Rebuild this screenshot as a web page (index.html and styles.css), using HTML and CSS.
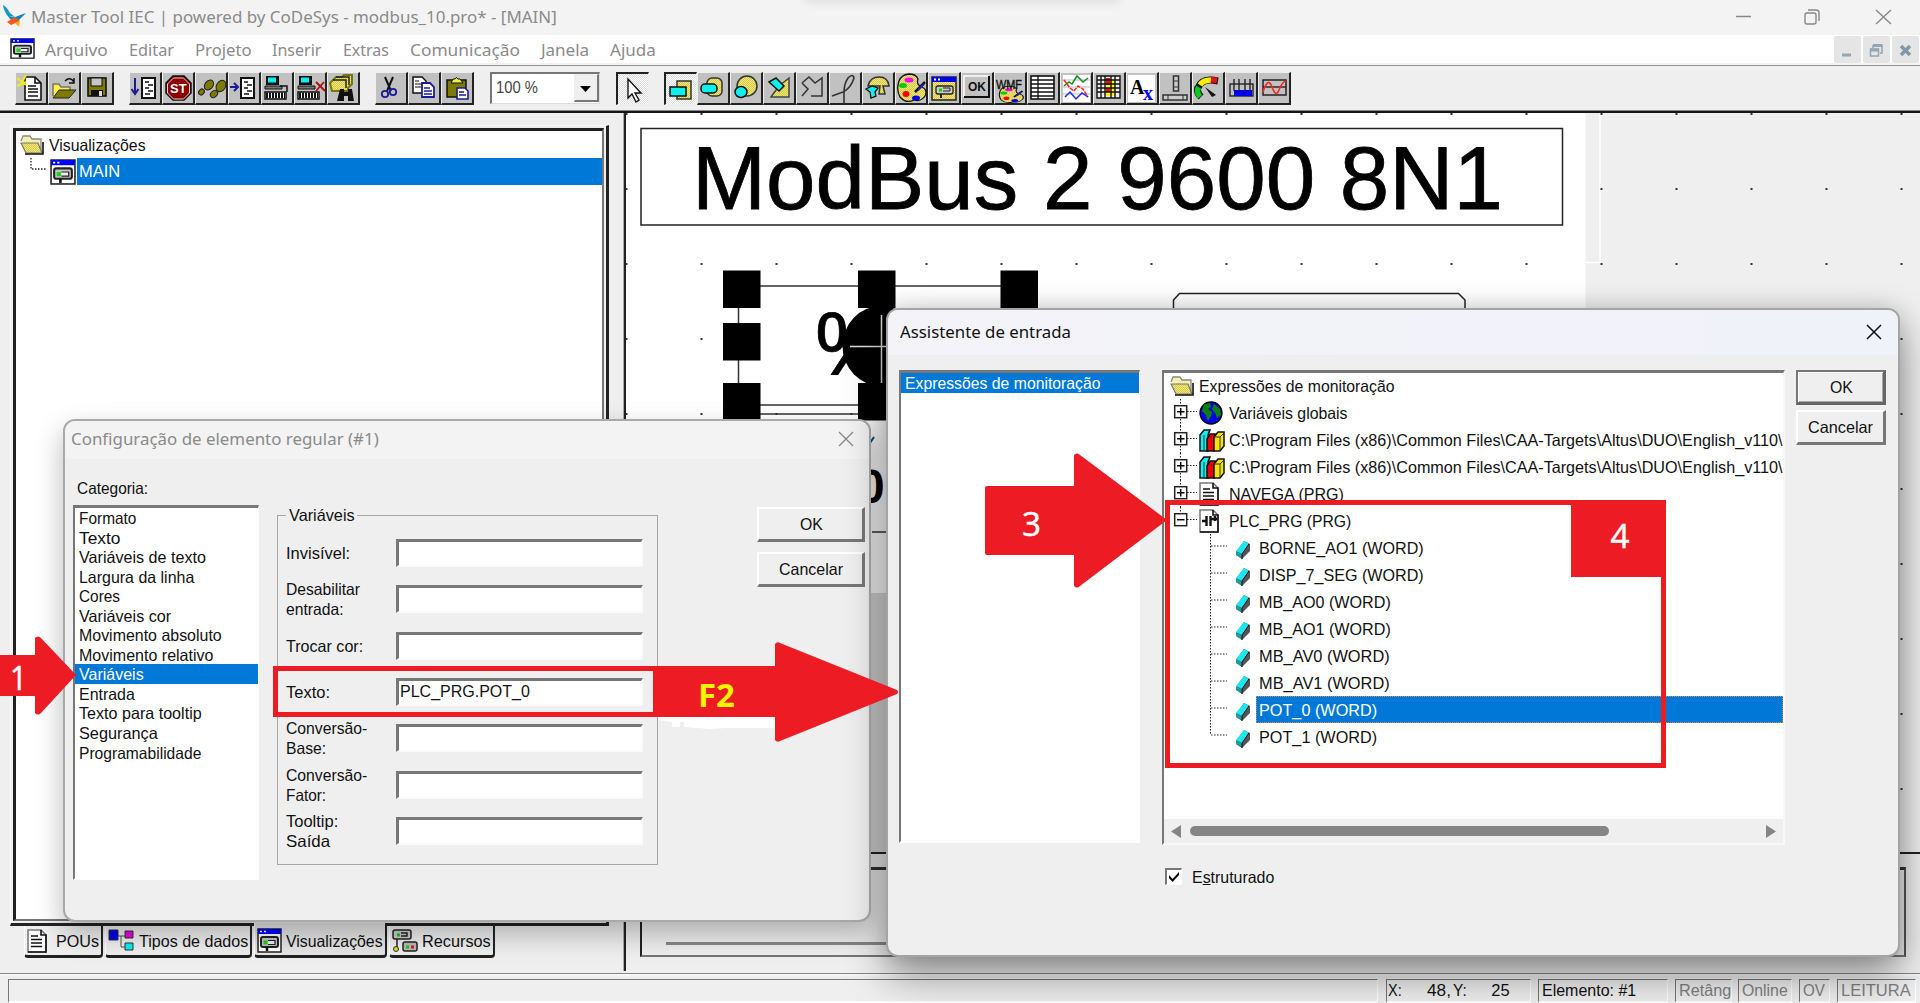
FILE: index.html
```html
<!DOCTYPE html>
<html lang="pt">
<head>
<meta charset="utf-8">
<title>Master Tool IEC</title>
<link rel="stylesheet" href="styles.css">
</head>
<body>
<svg width="0" height="0" class="defs">
  <defs>
    <pattern id="dither" width="2" height="2" patternUnits="userSpaceOnUse"><rect width="2" height="2" fill="#ffef3a"/><rect width="1" height="1" fill="#c9c08a"/><rect x="1" y="1" width="1" height="1" fill="#c9c08a"/></pattern>
    <symbol id="folder" viewBox="0 0 24 20"><path d="M1 6 3 1h7l2 3h9v13" fill="#f4f0b0" stroke="#888" stroke-width="1.3"/><path d="M1 8h17l4 10H6z" fill="url(#dither)" stroke="#777" stroke-width="1.2"/><path d="M5 19h18V7" fill="none" stroke="#111" stroke-width="1.6"/></symbol>
    <symbol id="visu" viewBox="0 0 25 25"><rect x="1" y="1" width="23" height="23" fill="#fff" stroke="#222" stroke-width="1.5"/><rect x="1" y="1" width="23" height="5" fill="#00f"/><path d="M3 3.5h2M7 3.5h2" stroke="#fff" stroke-width="1.5"/><rect x="4" y="9" width="17" height="10" rx="2" fill="#c4c4c4" stroke="#222" stroke-width="2"/><rect x="6.500" y="12.500" width="4" height="4" fill="#1fd01f"/><path d="M11 12.500h7v4h-7" fill="#eee" stroke="#222" stroke-width="1.200"/><path d="M10 19v4" stroke="#111" stroke-width="2.500"/></symbol>
    <symbol id="globe" viewBox="0 0 24 24"><circle cx="12" cy="12" r="11" fill="#0000e8" stroke="#000" stroke-width="1.3"/><path d="M5 3.500 11 2l1 4-3 2 4 3-1 4-3 5-2-6-4-4zM15 3l6 5 1 6-4 3-2-5-3-4z" fill="#078207"/></symbol>
    <symbol id="books" viewBox="0 0 26 26"><path d="M1 8 5 3h6l-2 5v16H1z" fill="#1ee" stroke="#111" stroke-width="1.500"/><path d="M8 12 11 7h5l-1 5v12H8z" fill="#e00" stroke="#111" stroke-width="1.500"/><path d="M15 10 19 5h6v14l-4 5h-6z" fill="#f4e400" stroke="#111" stroke-width="1.500"/><path d="M5 8v15M15 10h6v13M21 10l4-4" stroke="#333" fill="none"/></symbol>
    <symbol id="doc" viewBox="0 0 20 24"><path d="M1 1h13l5 5v17H1z" fill="#fff" stroke="#777" stroke-width="1.500"/><path d="M14 1v5h5v17H1" fill="none" stroke="#111" stroke-width="1.600"/><path d="M4 7h7M4 10.500h11M4 14h11M4 17.500h11" stroke="#111" stroke-width="1.600"/></symbol>
    <symbol id="ladder" viewBox="0 0 20 24"><path d="M1 1h13l5 5v17H1z" fill="#fff" stroke="#777" stroke-width="1.500"/><path d="M14 1v5h5v17H1" fill="none" stroke="#111" stroke-width="1.600"/><path d="M3 12h4M12 10h6M7.500 7v10M11.500 7v10M16 7v5" stroke="#111" stroke-width="2.400"/></symbol>
    <symbol id="gem" viewBox="0 0 16 20"><path d="M1 12 9 1l6 3v7l-8 8-6-4z" fill="#555"/><path d="M1 11 9 1l5 3-7 10z" fill="#1ee6f0"/><path d="M1 11.500 7 14v4l-6-3z" fill="#15a0a8"/><path d="M7 14l7-10M7 14v5" stroke="#111"/></symbol>
    <symbol id="plus" viewBox="0 0 27 27"><path d="M8.500 0v7M8.500 20v7M15 12.500h10" stroke="#222" stroke-dasharray="1.500 1.500"/><rect x="2.700" y="6.700" width="12" height="12" fill="#fff" stroke="#222" stroke-width="1.500"/><path d="M5 12.700h7.500M8.700 9v7.500" stroke="#000" stroke-width="1.500"/></symbol>
    <symbol id="minus" viewBox="0 0 27 27"><path d="M8.500 0v7M15 12.500h10" stroke="#222" stroke-dasharray="1.500 1.500"/><rect x="2.700" y="6.700" width="12" height="12" fill="#fff" stroke="#222" stroke-width="1.500"/><path d="M5 12.700h7.500" stroke="#000" stroke-width="1.500"/></symbol>
    <symbol id="twig" viewBox="0 0 20 27"><path d="M2.500 0v27M3 12h16" stroke="#222" stroke-dasharray="1.500 1.500"/></symbol>
    <symbol id="twigend" viewBox="0 0 20 27"><path d="M2.500 0v12M3 12h16" stroke="#222" stroke-dasharray="1.500 1.500"/></symbol>
    <symbol id="palette" viewBox="0 0 33 33"><path d="M4 9q2-6 10-7q7 0 9 5q-2 6 4 8q6 3 3 9q-4 6-11 4q-8 4-14-3Q1 18 4 9z" fill="url(#dither)" stroke="#111" stroke-width="1.300"/><ellipse cx="14" cy="8" rx="4.500" ry="2.500" fill="#f0f"/><ellipse cx="8" cy="13.500" rx="4" ry="2.500" fill="#0c0"/><ellipse cx="11" cy="22" rx="3.500" ry="3" fill="#f00"/><ellipse cx="21" cy="26" rx="4" ry="2.500" fill="#00d"/><path d="M30 10 20 20" stroke="#111" stroke-width="2.500"/><path d="M29 12l-6 6" stroke="#22b" stroke-width="2"/></symbol>
    <symbol id="plc" viewBox="0 0 33 33"><rect x="5" y="4" width="13" height="9" fill="#111"/><rect x="7" y="5.500" width="8" height="5" fill="#1ee"/><path d="M4 14h17v3H4z" fill="#777" stroke="#111"/><rect x="4" y="20" width="21" height="7" fill="#fff" stroke="#111" stroke-width="1.500"/><path d="M5 23.500h19" stroke="#111" stroke-width="6" stroke-dasharray="2 1"/></symbol>
  </defs>
</svg>

<div class="app">
  <header class="titlebar">
    <svg width="24" height="24" viewBox="0 0 24 24"><path d="M0 0q4 2 7 8l5 4-7-1Q1 7 0 0z" fill="#1597c8"/><path d="M3 8q4 5 9 4l11-4-9 9-7-3z" fill="#0d84b8"/><path d="M4 17l8-5 5 4-9 4z" fill="#f25a1e"/><path d="M12 18l5-2-1 6z" fill="#f7b01e"/></svg>
    <span class="t seg" data-w="526">Master Tool IEC | powered by CoDeSys - modbus_10.pro* - [MAIN]</span>
    <svg class="winctl" width="160" height="20" viewBox="0 0 160 20"><g fill="none" stroke="#888" stroke-width="1.400"><path d="M1 9.500h15M141 3l15 14M156 3l-15 14"/><rect x="70" y="6" width="11" height="11" rx="2"/><path d="M73 3h8q3 0 3 3v8"/></g></svg>
    <i class="peek"></i>
  </header>
  <nav class="menubar">
    <svg width="25" height="21" viewBox="0 0 25 25" preserveAspectRatio="none"><use href="#visu" width="25" height="25"/></svg>
    <span class="t seg" data-w="63">Arquivo</span><span class="t seg" data-w="45">Editar</span><span class="t seg" data-w="57">Projeto</span><span class="t seg" data-w="49">Inserir</span><span class="t seg" data-w="46">Extras</span><span class="t seg" data-w="110">Comunicação</span><span class="t seg" data-w="48">Janela</span><span class="t seg" data-w="46">Ajuda</span>
    <div class="mdi">
      <b><svg width="27" height="27"><path d="M8 19h9" stroke="#94a5b5" stroke-width="3"/></svg></b>
      <b><svg width="27" height="27"><g fill="none" stroke="#94a5b5" stroke-width="1.500"><path d="M10 9h9v8h-2M10 9v3"/><path d="M10 9.500h9" stroke-width="3"/><rect x="7.500" y="13" width="8" height="7"/><path d="M7 14h9" stroke-width="3"/></g></svg></b>
      <b><svg width="27" height="27"><path d="M9 10l9 9M18 10l-9 9" stroke="#8497a8" stroke-width="3.500"/></svg></b>
    </div>
  </nav>
  <div class="rule"></div>
  <div class="toolbar">
    <div class="group g1">
      <b><svg viewBox="0 0 33 33"><path d="M10 5h10l6 6v17H10z" fill="#fff" stroke="#111" stroke-width="1.600"/><path d="M20 5v6h6M13 14h8M13 17h10M13 20h10M13 24h10" stroke="#111" fill="none" stroke-width="1.600"/><path d="M2 6l9 7M11 3l-5 9M2 14l9-4" stroke="#f3ea20" stroke-width="2"/></svg></b>
      <b><svg viewBox="0 0 33 33"><path d="M5 24V12h6l2 3h9v4" fill="#ffef4a" stroke="#776" stroke-width="1.500"/><path d="M5 26 11 18h17l-7 8z" fill="#7e7a00" stroke="#222"/><path d="M17 9q5-5 9 1M26 6v5h-5" fill="none" stroke="#111" stroke-width="1.500"/></svg></b>
      <b><svg viewBox="0 0 33 33"><rect x="7" y="6" width="18" height="18" fill="#7e7a00" stroke="#111" stroke-width="1.600"/><rect x="10" y="6" width="11" height="8" fill="#c6c6c6" stroke="#111"/><path d="M10 18h12v6H10z" fill="#111"/><path d="M18 19h3v5h-3z" fill="#ddd"/></svg></b>
    </div>
    <div class="group g2">
      <b><svg viewBox="0 0 33 33"><rect x="13" y="6" width="13" height="20" fill="#fff" stroke="#111" stroke-width="2"/><path d="M16 10h4M19 13h5M16 16h4M19 19h5M16 22h5" stroke="#111" stroke-width="1.500"/><path d="M6 6v15M2.500 17l3.500 5 3.500-5" stroke="#1a1a99" fill="none" stroke-width="2"/></svg></b>
      <b><svg viewBox="0 0 33 33"><path d="M11 4h11l7 7v10l-7 7H11l-7-7V11z" fill="#8c0000" stroke="#111" stroke-width="1.500"/><path d="M11.500 6h10l6 6v9l-6 6h-10l-6-6v-9z" fill="none" stroke="#e8caca"/><text x="8" y="21" class="stop">ST</text></svg></b>
      <b><svg viewBox="0 0 33 33"><g fill="#7e7a00" stroke="#222"><ellipse cx="14" cy="13" rx="5.500" ry="4" transform="rotate(-50 14 13)"/><ellipse cx="6.500" cy="20" rx="3.200" ry="2.600" transform="rotate(-50 6.500 20)"/><ellipse cx="26" cy="14" rx="6" ry="4.500" transform="rotate(-60 26 14)"/><ellipse cx="19" cy="22" rx="4" ry="3" transform="rotate(-40 19 22)"/></g></svg></b>
      <b><svg viewBox="0 0 33 33"><rect x="13" y="6" width="13" height="20" fill="#fff" stroke="#111" stroke-width="2"/><path d="M16 10h4M19 13h5M16 16h4M19 19h5M16 22h5" stroke="#111" stroke-width="1.500"/><path d="M2 15h8M6 11l4 4-4 4" stroke="#1a1a99" fill="none" stroke-width="2"/></svg></b>
      <b><svg viewBox="0 0 33 33"><use href="#plc"/><path d="M19 14h7v6" fill="none" stroke="#111" stroke-width="1.500"/></svg></b>
      <b><svg viewBox="0 0 33 33"><use href="#plc"/><path d="M22 10l9 9M30 10l-8 9" stroke="#a11" stroke-width="1.800"/></svg></b>
      <b><svg viewBox="0 0 33 33"><path d="M9 5h6l2-2h8v9l-4 4v3H5l-2-8z" fill="url(#dither)" stroke="#7a7800" stroke-width="2"/><path d="M6 8h13v8M9 5h13v8" fill="none" stroke="#222" stroke-width="1.500"/><path d="M13 17h4v3h4v-3h4l2 12h-6v-5h-4v5h-7z" fill="#111"/></svg></b>
    </div>
    <div class="group g3">
      <b><svg viewBox="0 0 33 33"><path d="M10 5l6 14M18 5l-6 14" stroke="#111" stroke-width="2" fill="none"/><g fill="none" stroke="#1a1a99" stroke-width="1.800"><circle cx="10" cy="22" r="3.200"/><circle cx="18" cy="20" r="3.200"/></g></svg></b>
      <b><svg viewBox="0 0 33 33"><path d="M5 5h9l4 4v12H5z" fill="#fff" stroke="#111" stroke-width="1.500"/><path d="M7 9h4M7 12h8M7 15h8" stroke="#111"/><path d="M14 11h8l4 4v10H14z" fill="#fff" stroke="#1a1a99" stroke-width="1.800"/><path d="M16 16h6M16 19h8M16 22h8" stroke="#1a1a99" stroke-width="1.300"/></svg></b>
      <b><svg viewBox="0 0 33 33"><rect x="6" y="8" width="19" height="17" fill="#7e7a00" stroke="#111" stroke-width="1.500"/><path d="M10 11l2-4h2q1-3 3 0h2l3 4z" fill="#f5ea50" stroke="#111"/><path d="M16 16h8l3 3v8H16z" fill="#fff" stroke="#1a1a99" stroke-width="1.600"/><path d="M18 20h5M18 23h7" stroke="#1a1a99" stroke-width="1.300"/></svg></b>
    </div>
    <div class="combo"><span class="t ui" data-w="42">100 %</span><i><svg width="25" height="29"><path d="M7 13h11l-5.500 6z" fill="#000"/></svg></i></div>
    <div class="group g4"><b class="on"><svg viewBox="0 0 33 33"><path d="M11 6v19l4-4 4 8 3-2-4-7h6z" fill="#fff" stroke="#111" stroke-width="1.400"/></svg></b></div>
    <div class="group g5">
      <b class="on"><svg viewBox="0 0 33 33"><rect x="12" y="8" width="14" height="18" fill="url(#dither)" stroke="#333" stroke-width="1.500"/><rect x="5" y="14" width="16" height="9" fill="#1ee" stroke="#111" stroke-width="1.500"/></svg></b>
      <b><svg viewBox="0 0 33 33"><rect x="10" y="6" width="15" height="18" rx="5" fill="url(#dither)" stroke="#333" stroke-width="1.500"/><rect x="4" y="12" width="16" height="9" rx="4" fill="#1ee" stroke="#111" stroke-width="1.500"/></svg></b>
      <b><svg viewBox="0 0 33 33"><circle cx="17" cy="14" r="10" fill="url(#dither)" stroke="#333" stroke-width="1.500"/><ellipse cx="11" cy="20" rx="6" ry="5.500" fill="#1ee" stroke="#111" stroke-width="1.500"/></svg></b>
      <b><svg viewBox="0 0 33 33"><path d="M16 14 26 6v19H8z" fill="url(#dither)" stroke="#444" stroke-width="1.500"/><path d="M6 10l7-4 8 8-5 5z" fill="#1ee" stroke="#111" stroke-width="1.500"/></svg></b>
      <b><svg viewBox="0 0 33 33"><path d="M6 11l7-6 6 6 7-5v18H15M6 11l6 6-6 7" fill="none" stroke="#333" stroke-width="1.500"/></svg></b>
      <b><svg viewBox="0 0 33 33"><path d="M3 24l11-4q8-4 11-14q-1-5-6 0q-4 6-4 14v11" fill="none" stroke="#333" stroke-width="1.600"/></svg></b>
      <b><svg viewBox="0 0 33 33"><path d="M6 14q2-9 11-9t10 9h-6l2 8h-6l1-8z" fill="url(#dither)" stroke="#333" stroke-width="1.500"/><path d="M4 17l6-3 6 2-3 4 1 4-5 2-1-6z" fill="#1ee" stroke="#111" stroke-width="1.300"/></svg></b>
      <b><svg viewBox="0 0 33 33"><use href="#palette"/></svg></b>
      <b><svg viewBox="0 0 33 33"><rect x="4" y="5" width="24" height="23" fill="url(#dither)" stroke="#222" stroke-width="1.500"/><rect x="4" y="5" width="24" height="5" fill="#00e"/><path d="M6 7.500h2M10 7.500h2" stroke="#fff" stroke-width="2"/><rect x="8" y="14" width="17" height="8" rx="2" fill="#ccc" stroke="#222" stroke-width="1.300"/><path d="M11 18h3" stroke="#1c1" stroke-width="3"/><path d="M15 16h7v3h-7" fill="none" stroke="#222"/><path d="M13 22v4" stroke="#222" stroke-width="2"/></svg></b>
      <b><svg viewBox="0 0 33 33"><path d="M3 25V4h25" fill="none" stroke="#fff" stroke-width="1.500"/><path d="M3 25h25V4" fill="none" stroke="#111" stroke-width="2"/><text x="7" y="19" class="tiny" textLength="18">OK</text></svg></b>
      <b><svg viewBox="0 0 33 33"><g transform="translate(3 13) scale(.85 .6)"><use href="#palette" width="33" height="33"/></g><text x="2" y="17" class="tiny thin" textLength="26" lengthAdjust="spacingAndGlyphs">WMF</text></svg></b>
      <b><svg viewBox="0 0 33 33"><rect x="4" y="4" width="23" height="23" fill="#fff" stroke="#111" stroke-width="1.600"/><path d="M4 8h23M4 12h23M4 16h23M4 20h23M4 24h23M11 4v23" stroke="#111" stroke-width="1.300"/></svg></b>
      <b><svg viewBox="0 0 33 33"><rect x="3" y="3" width="27" height="27" fill="#fff"/><path d="M3 8h27M3 15h27M3 22h27" stroke="#bbb"/><path d="M4 14l5-4 3 2 5-8 6 6 5-4" fill="none" stroke="#118a22" stroke-width="1.500"/><path d="M4 8l6 8 4 3 4-5 5 3 5 8" fill="none" stroke="#f22" stroke-width="1.500" stroke-dasharray="4 1"/><path d="M5 25l5-5 6 7 6-6 6 4" fill="none" stroke="#22f" stroke-width="1.500"/></svg></b>
      <b><svg viewBox="0 0 33 33"><rect x="4" y="4" width="23" height="22" fill="#eee"/><path d="M12 8h10v16H12z" fill="#ffee20"/><path d="M13 6h4v7h-4zM13 16h4v4h-4z" fill="#e11"/><path d="M4 4h23v22H4zM4 8h23M4 12h23M4 16h23M4 20h23M8 4v22M12 4v22M18 4v22M22 4v22" fill="none" stroke="#111" stroke-width="1.400"/></svg></b>
      <b><svg viewBox="0 0 33 33"><rect x="2" y="3" width="27" height="27" fill="#fff"/><text x="4" y="22" class="axa">A</text><text x="17" y="28" class="axx">x</text></svg></b>
      <b><svg viewBox="0 0 33 33"><g fill="#ccc" stroke="#333" stroke-width="1.500"><rect x="14.500" y="4" width="5" height="15"/><rect x="4" y="23" width="24" height="5"/></g><path d="M15 9h4M15 15h4M9 23v5M24 23v5" stroke="#333"/></svg></b>
      <b><svg viewBox="0 0 33 33"><g fill="none" stroke-width="5.500"><path d="M9 25Q4 20 6 15" stroke="#111" stroke-width="7"/><path d="M6 16Q9 7 20 8L26 9" stroke="#111" stroke-width="7"/><path d="M8 25Q4 20 6.500 15" stroke="#0c2"/><path d="M8 13Q11 8 19 8" stroke="#fe0"/><path d="M19 7.500l6 1" stroke="#e11"/></g><path d="M13 15l11 8-4 2z" fill="#111"/></svg></b>
      <b><svg viewBox="0 0 33 33"><rect x="5" y="12" width="23" height="12" fill="none" stroke="#222" stroke-width="1.400"/><path d="M9 18h18v6H9z" fill="#00e"/><path d="M9 7v12M14 7v12M20 7v12M25 7v12" stroke="#222" stroke-width="1.400"/></svg></b>
      <b><svg viewBox="0 0 33 33"><rect x="5" y="8" width="23" height="15" fill="none" stroke="#222" stroke-width="1.500"/><path d="M5 15h23" stroke="#222" stroke-width="1.400"/><path d="M5 20q5-16 9-5t7 3 7-9" fill="none" stroke="#f22" stroke-width="1.600"/></svg></b>
    </div>
  </div>
  <div class="darkrule"></div>

  <main class="workspace">
    <section class="objects">
      <div class="frame"><div class="tree-main">
        <div class="root"><svg width="24" height="20"><use href="#folder"/></svg><span class="t ui" data-w="97">Visualizações</span></div>
        <div class="leaf"><svg width="18" height="27" viewBox="0 0 18 27"><path d="M1 0v11h16" fill="none" stroke="#222" stroke-dasharray="1.500 1.500" stroke-width="1.300"/></svg><svg width="26" height="26"><use href="#visu"/></svg><div class="sel"><span class="t ui" data-w="41">MAIN</span></div></div>
      </div></div>
      <div class="tabs">
        <div class="tab"><svg width="20" height="24"><use href="#doc"/></svg><span class="t ui" data-w="43">POUs</span></div>
        <div class="tab"><svg width="26" height="24"><path d="M9 7h8M13 7v11h4" fill="none" stroke="#555"/><path d="M1 1h9v10H1z" fill="#00e" stroke="#333"/><path d="M17 2h8v7h-8z" fill="#e0d" stroke="#333"/><path d="M17 14h8v7h-8z" fill="#1ee" stroke="#333"/></svg><span class="t ui" data-w="109">Tipos de dados</span></div>
        <div class="tab open"><svg width="25" height="25"><use href="#visu"/></svg><span class="t ui" data-w="97">Visualizações</span></div>
        <div class="tab"><svg width="26" height="24"><rect x="1" y="1" width="18" height="9" rx="2" fill="#ccc" stroke="#222" stroke-width="1.500"/><path d="M5 6h3" stroke="#1c1" stroke-width="3"/><path d="M9 4h6v3H9M5 10v9" fill="none" stroke="#222" stroke-width="1.500"/><rect x="11" y="13" width="14" height="9" rx="2" fill="#bbb" stroke="#222" stroke-width="1.500"/><path d="M14 18h3" stroke="#1c1" stroke-width="3"/><path d="M19 18h3" stroke="#e11" stroke-width="3"/><circle cx="4" cy="20" r="2.500" fill="#dd2" stroke="#333"/></svg><span class="t ui" data-w="69">Recursos</span></div>
      </div>
    </section>
    <section class="editor">
      <svg class="canvas" width="1294" height="739" viewBox="626 113 1294 739">
        <defs><pattern id="grid" x="625.500" y="188" width="75" height="75" patternUnits="userSpaceOnUse"><rect width="2" height="2" fill="#333"/></pattern></defs>
        <rect x="626" y="113" width="959.500" height="480" fill="#fff"/>
        <rect x="626" y="593" width="959.500" height="260" fill="#dadada"/>
        <path d="M1600 113v149.500h-15" fill="none" stroke="#fff" stroke-width="1.500"/>
        <rect x="626" y="113" width="1294" height="739" fill="url(#grid)"/>
        <rect x="641" y="128.500" width="921.500" height="96.500" fill="#fff" stroke="#222" stroke-width="1.500"/>
        <text x="692" y="208.500" class="big heavy" textLength="811" lengthAdjust="spacingAndGlyphs">ModBus 2 9600 8N1</text>
        <rect x="738.500" y="286" width="283" height="119" fill="#fff" stroke="#333" stroke-width="1.500"/>
        <path d="M738 414h300M872 532h300" stroke="#333" stroke-width="1.500"/>
        <text x="815" y="374" class="big heavy">%</text>
        <ellipse cx="881" cy="346" rx="38.500" ry="40"/>
        <path d="M850 346.500h60M881.500 315v68" stroke="#ddd" stroke-width="1.500"/>
        <path d="M723 270.500h37.500V308H723zM858 270.500h37.500V308H858zM1000.500 270.500h37.500V308h-37.500zM723 323h37.500v37.500H723zM723 383h37.500v37.500H723zM858 383h37.500v37.500H858z"/>
        <path d="M874 437l-4 6" stroke="#148" stroke-width="2"/>
        <text x="858" y="503" class="digit">0</text>
        <path d="M1173.500 320v-20l6-6.500h279l6.500 6.500v20" fill="none" stroke="#222" stroke-width="1.500"/>
      </svg>
      <div class="messages"><div class="pane"><i></i></div></div>
    </section>
  </main>
  <footer class="status">
    <div class="cell main"></div>
    <div class="cell c1"><span class="t ui" data-w="14">X:</span><span class="t ui" data-w="24">48,</span><span class="t ui" data-w="14">Y:</span><span class="t ui" data-w="18">25</span></div>
    <div class="cell c2"><span class="t ui" data-w="94">Elemento: #1</span></div>
    <div class="cell c3 off"><span class="t ui" data-w="52">Retâng</span></div>
    <div class="cell c4 off"><span class="t ui" data-w="46">Online</span></div>
    <div class="cell c5 off"><span class="t ui" data-w="22">OV</span></div>
    <div class="cell c6 off"><span class="t ui" data-w="70">LEITURA</span></div>
  </footer>
</div>

<div class="window config">
  <div class="caption"><span class="t seg" data-w="308">Configuração de elemento regular (#1)</span><svg width="16" height="16"><path d="M1 1l14 14M15 1L1 15" stroke="#888" stroke-width="1.300"/></svg></div>
  <div class="content">
    <div class="cats">
      <label><span class="t ui" data-w="71">Categoria:</span></label>
      <div class="list">
        <p><span class="t ui" data-w="57">Formato</span></p><p><span class="t ui" data-w="41">Texto</span></p><p><span class="t ui" data-w="127">Variáveis de texto</span></p><p><span class="t ui" data-w="115">Largura da linha</span></p><p><span class="t ui" data-w="41">Cores</span></p><p><span class="t ui" data-w="92">Variáveis cor</span></p><p><span class="t ui" data-w="143">Movimento absoluto</span></p><p><span class="t ui" data-w="134">Movimento relativo</span></p><p class="sel"><span class="t ui" data-w="65">Variáveis</span></p><p><span class="t ui" data-w="56">Entrada</span></p><p><span class="t ui" data-w="123">Texto para tooltip</span></p><p><span class="t ui" data-w="79">Segurança</span></p><p><span class="t ui" data-w="122">Programabilidade</span></p>
      </div>
    </div>
    <fieldset>
      <legend><span class="t ui" data-w="66">Variáveis</span></legend>
      <div class="row"><label><span class="t ui" data-w="64">Invisível:</span></label><div class="input"></div></div>
      <div class="row"><label><span class="t ui" data-w="74">Desabilitar</span><span class="t ui" data-w="58">entrada:</span></label><div class="input"></div></div>
      <div class="row"><label><span class="t ui" data-w="77">Trocar cor:</span></label><div class="input"></div></div>
      <div class="row"><label><span class="t ui" data-w="44">Texto:</span></label><div class="input"><span class="t ui" data-w="130">PLC_PRG.POT_0</span></div></div>
      <div class="row"><label><span class="t ui" data-w="81">Conversão-</span><span class="t ui" data-w="40">Base:</span></label><div class="input"></div></div>
      <div class="row"><label><span class="t ui" data-w="81">Conversão-</span><span class="t ui" data-w="40">Fator:</span></label><div class="input"></div></div>
      <div class="row"><label><span class="t ui" data-w="52">Tooltip:</span><span class="t ui" data-w="44">Saída</span></label><div class="input"></div></div>
    </fieldset>
    <div class="buttons"><button><span class="t ui" data-w="23">OK</span></button><button><span class="t ui" data-w="64">Cancelar</span></button></div>
  </div>
</div>

<div class="window assist">
  <div class="caption"><span class="t seg" data-w="171">Assistente de entrada</span><svg width="16" height="16"><path d="M1 1l14 14M15 1L1 15" stroke="#111" stroke-width="1.500"/></svg></div>
  <div class="content">
    <div class="list"><p class="sel"><span class="t ui" data-w="196">Expressões de monitoração</span></p></div>
    <div class="right">
      <div class="tree">
        <div class="n0"><svg width="24" height="20"><use href="#folder"/></svg><span class="t ui" data-w="196">Expressões de monitoração</span></div>
        <div class="n1"><svg width="27" height="27"><use href="#plus"/></svg><svg width="24" height="24"><use href="#globe"/></svg><span class="t ui" data-w="119">Variáveis globais</span></div>
        <div class="n1"><svg width="27" height="27"><use href="#plus"/></svg><svg width="26" height="26"><use href="#books"/></svg><span class="t ui" data-w="554">C:\Program Files (x86)\Common Files\CAA-Targets\Altus\DUO\English_v110\</span></div>
        <div class="n1"><svg width="27" height="27"><use href="#plus"/></svg><svg width="26" height="26"><use href="#books"/></svg><span class="t ui" data-w="554">C:\Program Files (x86)\Common Files\CAA-Targets\Altus\DUO\English_v110\</span></div>
        <div class="n1"><svg width="27" height="27"><use href="#plus"/></svg><svg width="20" height="24"><use href="#doc"/></svg><span class="t ui" data-w="115">NAVEGA (PRG)</span></div>
        <div class="n1"><svg width="27" height="27"><use href="#minus"/></svg><svg width="20" height="24"><use href="#ladder"/></svg><span class="t ui" data-w="122">PLC_PRG (PRG)</span></div>
        <div class="n2"><svg width="20" height="27"><use href="#twig"/></svg><svg width="16" height="20"><use href="#gem"/></svg><div><span class="t ui" data-w="165">BORNE_AO1 (WORD)</span></div></div>
        <div class="n2"><svg width="20" height="27"><use href="#twig"/></svg><svg width="16" height="20"><use href="#gem"/></svg><div><span class="t ui" data-w="165">DISP_7_SEG (WORD)</span></div></div>
        <div class="n2"><svg width="20" height="27"><use href="#twig"/></svg><svg width="16" height="20"><use href="#gem"/></svg><div><span class="t ui" data-w="132">MB_AO0 (WORD)</span></div></div>
        <div class="n2"><svg width="20" height="27"><use href="#twig"/></svg><svg width="16" height="20"><use href="#gem"/></svg><div><span class="t ui" data-w="132">MB_AO1 (WORD)</span></div></div>
        <div class="n2"><svg width="20" height="27"><use href="#twig"/></svg><svg width="16" height="20"><use href="#gem"/></svg><div><span class="t ui" data-w="131">MB_AV0 (WORD)</span></div></div>
        <div class="n2"><svg width="20" height="27"><use href="#twig"/></svg><svg width="16" height="20"><use href="#gem"/></svg><div><span class="t ui" data-w="131">MB_AV1 (WORD)</span></div></div>
        <div class="n2"><svg width="20" height="27"><use href="#twig"/></svg><svg width="16" height="20"><use href="#gem"/></svg><div class="sel focus"><span class="t ui" data-w="118">POT_0 (WORD)</span></div></div>
        <div class="n2"><svg width="20" height="27"><use href="#twigend"/></svg><svg width="16" height="20"><use href="#gem"/></svg><div><span class="t ui" data-w="118">POT_1 (WORD)</span></div></div>
        <div class="scroll"><svg width="11" height="13"><path d="M10 0v13L0 6.500z" fill="#858585"/></svg><i></i><svg width="11" height="13"><path d="M1 0v13l10-6.500z" fill="#858585"/></svg></div>
      </div>
      <div class="check"><b><svg width="14" height="14"><path d="M2 5l3.500 4L12 2v3l-6.500 7L2 8z" fill="#000"/></svg></b><span class="t ui" data-w="82">E<u>s</u>truturado</span></div>
    </div>
    <div class="buttons"><button class="default"><span class="t ui" data-w="23">OK</span></button><button><span class="t ui" data-w="65">Cancelar</span></button></div>
  </div>
</div>

<svg class="notes" width="1920" height="1003" viewBox="0 0 1920 1003">
  <path d="M658 717h118v11h-50l-16 1-26-2v-5h-4v5h-8v-5l-14-2z" fill="#fff"/>
  <g fill="#ed1c24">
    <path d="M0 655h35v-17q3-3 6 0l35 37-35 38q-3 3-6 0v-17H0z"/>
    <path d="M654 666h121v-22q2-3 5-1l117 47q2 2 0 4l-117 47q-3 2-5-1v-23H654z"/>
    <path d="M985 488q0-2 2-2h87v-31q3-3 6 0l87 65-87 66q-3 3-6 0v-31h-87q-2 0-2-2z"/>
    <path d="M1571 500h95v77h-95z"/>
  </g>
  <g fill="none" stroke="#ed1c24" stroke-width="5"><rect x="275.500" y="668.500" width="380" height="46"/><rect x="1167.500" y="502.500" width="496" height="263"/></g>
  <g class="num"><text x="10" y="689.500" textLength="17" lengthAdjust="spacingAndGlyphs">1</text><text x="1022" y="536" textLength="19" lengthAdjust="spacingAndGlyphs">3</text><text x="1610.500" y="548" textLength="19" lengthAdjust="spacingAndGlyphs">4</text><text x="698" y="706.500" class="key" textLength="37" lengthAdjust="spacingAndGlyphs">F2</text></g>
</svg>
<script src="fit.js"></script>
</body>
</html>
```
FILE: styles.css
```css
* { box-sizing: border-box; }
body { margin: 0; width: 1920px; height: 1003px; overflow: hidden; background: #efefef; color: #111; font-family: "Liberation Sans", Arial, sans-serif; }
p { margin: 0; }
.defs { position: absolute; }
svg { display: block; flex: none; }
.t { display: inline-block; white-space: pre; transform-origin: 0 50%; flex: none; }
.ui { font-family: "Liberation Sans", Arial, sans-serif; font-size: 16.5px; line-height: 20px; }
.seg { font-family: "Noto Sans", "Open Sans", sans-serif; font-size: 17px; line-height: 24px; color: #8a8a8a; }
.sel { background: #0078d7; color: #fff; }

.app { display: flex; flex-direction: column; height: 1003px; }
.titlebar { height: 35px; background: #f3f3f3; display: flex; align-items: center; padding: 0 24px 2px 3px; gap: 4px; position: relative; }
.titlebar .winctl { margin-left: auto; margin-right: 1px; }
.peek { position: absolute; left: 805px; top: -8px; width: 315px; height: 8px; box-shadow: 0 2px 10px rgba(0,0,0,.1); }
.menubar { height: 28px; background: #fff; display: flex; align-items: center; padding: 1px 1px 0 10px; }
.menubar svg { margin-top: -3px; }
.menubar .t { margin-left: 21px; }
.menubar .t:nth-of-type(1) { margin-left: 10px; }
.mdi { display: flex; gap: 2px; margin-left: auto; }
.mdi b { width: 27px; height: 27px; background: #e5e5e5; border-radius: 2px; }
.mdi svg { margin: 0; }
.rule { height: 5px; background: linear-gradient(#f3f3f3 2px, #999 2px, #999 3px, #ddd 3px, #fff 5px); }
.toolbar { height: 42px; display: flex; padding: 4px 0 0 15px; }
.group { display: flex; height: 33px; }
.group b { display: block; width: 33px; height: 33px; background: #c1c1c1; border: solid; border-width: 1px 2px 2px 1px; border-color: #eee #222 #222 #eee; }
.group b svg { width: 33px; height: 33px; margin: -1px; }
.group b.on { background: repeating-conic-gradient(#ddd 0 25%, #fff 0 50%) 0 0 / 2px 2px; border-color: #222 #eee #eee #222; border-width: 2px 1px 1px 2px; }
.g2 { margin-left: 15px; }
.g3 { margin-left: 15px; }
.g4 { margin-left: 16px; }
.g5 { margin-left: 15px; }
.stop { font: bold 13px "Liberation Sans", sans-serif; fill: #fff; }
.tiny { font: bold 12px "Liberation Sans", sans-serif; fill: #111; }
.thin { font-size: 13px; font-weight: normal; stroke: #111; stroke-width: .4px; }
.axa { font: bold 20px "Liberation Serif", serif; }
.axx { font: bold 20px "Liberation Serif", serif; fill: #00f; }
.combo { width: 110px; height: 32px; margin-left: 16px; background: #fff; border: solid; border-width: 2px 1px 1px 2px; border-color: #777 #ddd #ddd #777; display: flex; justify-content: space-between; padding-left: 4px; }
.combo .t { color: #444; margin-top: 3px; }
.combo i { width: 25px; height: 28px; background: #efefef; border: solid; border-width: 1px 2px 2px 1px; border-color: #eee #777 #777 #eee; }
.combo i svg { margin: -2px; }
.darkrule { height: 3px; background: linear-gradient(#888 1px, #161616 1px); }

.workspace { height: 860px; display: flex; }
.objects { width: 626px; height: 858px; border-right: 2px solid #222; box-shadow: inset -1px 0 #aaa; padding: 12px 15px 0 10px; }
.frame { height: 801px; border: solid; border-width: 1px 3px 3px 1px; border-color: #f8f8f8 #222 #222 #f8f8f8; padding: 2px 2px 2px 2px; }
.tree-main { height: 100%; background: #fff; border: solid; border-width: 3px 2px 2px 3px; border-color: #222 #777 #777 #222; }
.root { display: flex; align-items: center; gap: 5px; height: 27px; padding-left: 4px; }
.leaf { display: flex; align-items: center; height: 27px; padding-left: 14px; }
.leaf svg:nth-child(2) { margin-left: 2px; }
.leaf .sel { flex: 1; height: 27px; padding: 3px 3px 3px 2px; margin-left: 1px; }
.tabs { display: flex; padding-left: 14px; gap: 2px; }
.tab { height: 32px; display: flex; align-items: center; justify-content: space-between; border: solid #222; border-width: 0 2px 3px 0; border-radius: 0 0 4px 4px; border-left: 1px solid #fff; padding-left: 2px; padding-right: 2px; }
.tab:nth-child(1) { width: 79px; }
.tab:nth-child(2) { width: 147px; }
.tab:nth-child(3) { width: 133px; margin-top: -3px; height: 35px; padding-top: 3px; background: #e6e6e6; }
.tab:nth-child(4) { width: 106px; }
.editor { width: 1294px; }
.big { font: 89px "Liberation Sans", Arial, sans-serif; }
.heavy { stroke: #000; stroke-width: .8px; }
.digit { font: bold 48px "Liberation Sans", Arial, sans-serif; }
.messages { height: 119px; border-top: 2px solid #222; padding: 13px 14px 0 14px; }
.pane { height: 90px; border: solid #777; border-width: 3px 2px 2px 2px; border-color: #333 #555 #777 #222; padding: 62px 0 0 24px; }
.pane i { display: block; height: 3px; background: #888; width: 900px; margin-top: 10px; }
.status { height: 30px; border-top: 1px solid #888; display: flex; padding-top: 5px; padding-left: 8px; box-shadow: inset 0 2px #f6f6f6; }
.cell { height: 24px; border: solid; border-width: 1px 1px 2px 1px; border-color: #777 #fff #fff #777; display: flex; overflow: hidden; padding: 0 0 0 3px; }
.main { width: 1370px; }
.c1 { width: 145px; margin-left: 8px; padding-left: 1px; }
.c1 .t:nth-child(2) { margin-left: 25px; }
.c1 .t:nth-child(3) { margin-left: 2px; }
.c1 .t:nth-child(4) { margin-left: 25px; }
.c2 { width: 130px; margin-left: 7px; }
.c3 { width: 57px; margin-left: 7px; }
.c4 { width: 54px; margin-left: 6px; }
.c5 { width: 31px; margin-left: 7px; }
.c6 { width: 79px; margin-left: 7px; }
.off { color: #808080; }

.window { position: absolute; background: #efefef; border-radius: 12px; overflow: hidden; }
.caption { display: flex; justify-content: space-between; align-items: center; }
.content { display: flex; align-items: flex-start; }
.list { background: #fff; border: solid; border-width: 3px 2px 2px 2px; border-color: #777 #fff #fff #777; }
.config { left: 63px; top: 419px; width: 808px; height: 503px; border: 2px solid #a9a9a9; box-shadow: 0 12px 28px rgba(0,0,0,.28); }
.config .caption { height: 38px; background: #f3f3f3; padding: 0 15px 2px 6px; }
.cats { margin: 19px 0 0 8px; width: 186px; }
.cats label { display: block; height: 20px; padding-left: 4px; margin-bottom: 7px; }
.cats .list { height: 375px; border-right-width: 1px; }
.cats p { height: 19.55px; padding-left: 4px; }
.cats p .t { line-height: 20px; }
fieldset { margin: 46px 0 0 18px; width: 381px; height: 360px; border: 1px solid #a6a6a6; padding: 5px 14px 0 8px; min-width: 0; }
legend { padding: 0 2px 0 3px; height: 20px; line-height: 20px; }
.row { display: flex; align-items: center; justify-content: space-between; height: 46.3px; }
.row label { display: flex; flex-direction: column; align-items: flex-start; }
.input { width: 247px; height: 28px; background: #fff; border: solid; border-width: 3px 2px 2px 3px; border-color: #777 #fafafa #fafafa #777; padding-left: 1px; }
.input .t { line-height: 21px; }
.buttons { display: flex; flex-direction: column; }
button { background: #efefef; border: solid; border-width: 2px 3px 3px 2px; border-color: #fff #777 #777 #fff; padding: 0 0 1px 1px; height: 35px; color: #111; display: flex; align-items: center; justify-content: center; border-radius: 0; }
.config .buttons { margin: 48px 0 0 99px; gap: 10px; }
.config button { width: 108px; }

.assist { left: 886px; top: 308px; width: 1014px; height: 649px; border: 2px solid #a4a4a4; box-shadow: 0 18px 42px rgba(0,0,0,.42), 0 0 22px rgba(0,0,0,.12); }
.assist .caption { height: 45px; background: linear-gradient(90deg, #f3f3f8, #f0f2f9); padding: 0 16px 2px 12px; }
.assist .caption .t { color: #111; }
.assist .content { padding: 15px 0 0 11px; }
.assist .list { width: 241px; height: 473px; border-right-width: 1px; }
.assist .list p { height: 20px; padding-left: 4px; }
.right { margin-left: 22px; width: 623px; }
.tree { height: 475px; background: #fff; border: solid; border-width: 3px 2px 2px 2px; border-color: #777 #f8f8f8 #f8f8f8 #777; display: flex; flex-direction: column; overflow: hidden; }
.tree > div { display: flex; align-items: center; height: 27px; flex: none; }
.tree > .n0 { padding-left: 6px; gap: 5px; height: 26px; }
.tree > .n1 { padding-left: 8px; display: grid; grid-template-columns: 27px 30px 1fr; justify-items: start; }
.n2 { padding-left: 44px; }
.n2 svg:nth-child(2) { margin: 4px 5px 0 7px; }
.n2 > div { flex: 1; height: 27px; padding: 4px 0 0 3px; }
.focus { outline: 1px dotted #d68a4a; outline-offset: -1px; }
.tree .scroll { margin-top: auto; height: 24px; background: #efefef; padding: 0 7px; }
.scroll i { width: 419px; height: 10px; border-radius: 5px; background: #858585; margin-left: 8px; margin-right: auto; }
.check { display: flex; align-items: center; gap: 10px; margin-top: 21px; margin-left: 3px; height: 21px; }
.check b { width: 17px; height: 17px; background: #fff; border: solid; border-width: 2px 1px 1px 2px; border-color: #777 #fff #fff #777; }
.assist .buttons { margin-left: 11px; gap: 5px; }
.assist button { width: 90px; }
.assist .default { border-color: #777 #666 #666 #777; box-shadow: inset 1px 1px #fff, inset -1px -1px #aaa; }

.notes { position: absolute; left: 0; top: 0; pointer-events: none; }
.num text { font: 33px "Open Sans", sans-serif; fill: #fff; stroke: #fff; stroke-width: .5px; }
.num .key { font: bold 33px "Open Sans", sans-serif; fill: #fff200; stroke: none; }
```
FILE: fit.js
```js
// Condense or widen each label to the width given in its data-w attribute.
document.querySelectorAll('.t[data-w]').forEach(function (el) {
  var target = Number(el.dataset.w);
  var natural = el.offsetWidth;
  el.style.transform = 'scaleX(' + target / natural + ')';
  el.style.marginRight = (target - natural) + 'px';
});
```
